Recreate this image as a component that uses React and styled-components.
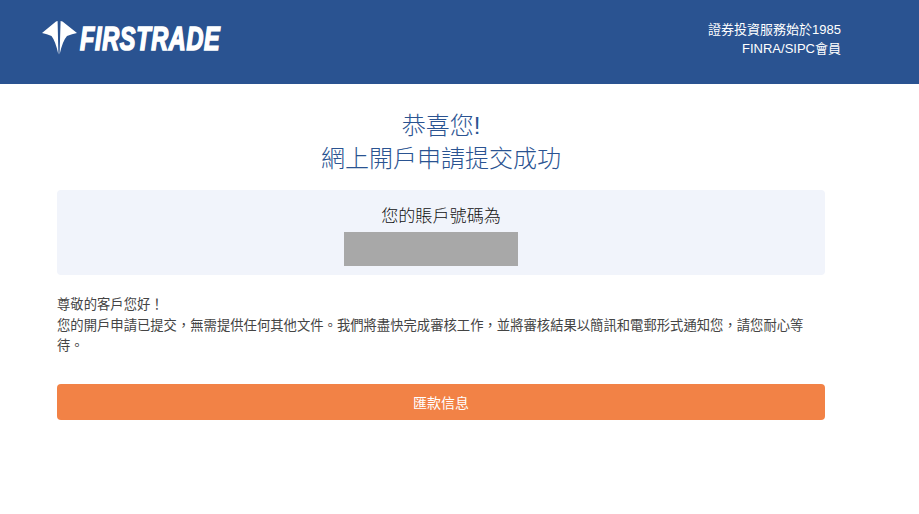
import React from "react";
import styled, { createGlobalStyle } from "styled-components";

const Global = createGlobalStyle`
  html, body { margin: 0; padding: 0; background: #fff; }
  body { font-family: "Liberation Sans", "Noto Sans CJK TC", sans-serif; }
`;
const Header = styled.header`
  height: 84px;
  background: #2a5391;
  display: flex;
  align-items: center;
  justify-content: space-between;
  padding: 0 78px 0 42px;
`;
const Logo = styled.div`
  display: flex;
  align-items: center;
  gap: 3px;
  margin-top: -8px;
`;
const LogoWord = styled.span`
  display: inline-block;
  width: 140px;
  font: italic 700 33px/1 "Liberation Sans", sans-serif;
  color: #fff;
  -webkit-text-stroke: 1.7px #fff;
  letter-spacing: 1px;
  white-space: nowrap;
  transform: scaleX(0.71);
  transform-origin: left center;
`;
const Tagline = styled.div`
  color: #fff;
  font-size: 13px;
  line-height: 19px;
  text-align: right;
  margin-top: -7px;
`;
const Main = styled.main`
  width: 768px;
  margin-left: 57px;
`;
const Title = styled.h1`
  margin: 25px 0 0;
  color: #2a5391;
  font-size: 24px;
  font-weight: 300;
  line-height: 33px;
  text-align: center;
`;
const AccountCard = styled.section`
  margin-top: 15px;
  height: 85px;
  background: #f1f4fb;
  border-radius: 4px;
  padding-top: 17px;
  box-sizing: border-box;
`;
const AccountLabel = styled.div`
  color: #111;
  font-size: 17.1px;
  font-weight: 300;
  line-height: 20px;
  text-align: center;
`;
const Redacted = styled.div`
  width: 174px;
  height: 34px;
  margin: 5px 0 0 287px;
  background: #a8a8a8;
`;
const Message = styled.p`
  margin: 20px 0 0;
  color: #444;
  font-size: 13.33px;
  line-height: 20.5px;
`;
const ActionButton = styled.button`
  display: block;
  width: 100%;
  height: 36px;
  margin-top: 27px;
  border: 0;
  border-radius: 4px;
  background: #f28246;
  color: #fff;
  font-family: inherit;
  font-size: 14px;
`;

function LogoMark() {
  return (
    <svg width="35" height="34" viewBox="0 0 35 34" aria-hidden="true">
      <path fill="#fff" d="M0 12 L14 0.5 L15.6 0 L16.4 33.5 Q13.5 20 9.5 15 Q5 13 0 12 Z" />
      <path fill="#fff" d="M35 12 L20.5 0.5 L18.6 0 L17.6 33.5 Q20.5 20 25 15 Q30 13 35 12 Z" />
    </svg>
  );
}

export default function App() {
  return (
    <>
      <Global />
      <Header>
        <Logo>
          <LogoMark />
          <LogoWord>FIRSTRADE</LogoWord>
        </Logo>
        <Tagline>
          證券投資服務始於1985
          <br />
          FINRA/SIPC會員
        </Tagline>
      </Header>
      <Main>
        <Title>
          恭喜您!
          <br />
          網上開戶申請提交成功
        </Title>
        <AccountCard>
          <AccountLabel>您的賬戶號碼為</AccountLabel>
          <Redacted />
        </AccountCard>
        <Message>
          尊敬的客戶您好！
          <br />
          您的開戶申請已提交，無需提供任何其他文件。我們將盡快完成審核工作，並將審核結果以簡訊和電郵形式通知您，請您耐心等待。
        </Message>
        <ActionButton>匯款信息</ActionButton>
      </Main>
    </>
  );
}
